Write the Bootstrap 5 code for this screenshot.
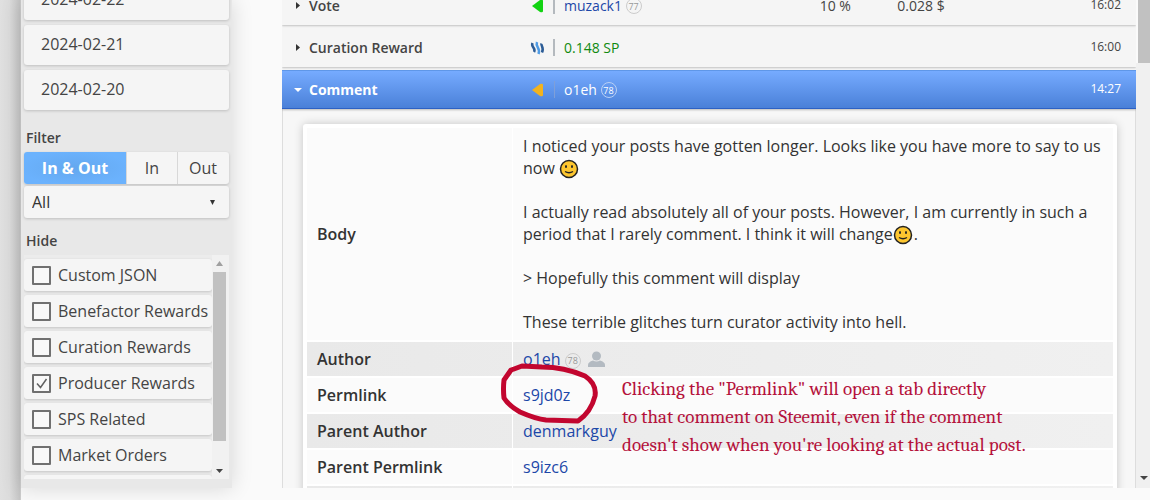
<!DOCTYPE html>
<html lang="en">
<head>
<meta charset="utf-8">
<meta name="viewport" content="width=device-width, initial-scale=1">
<title>Account history</title>
<link href="https://cdn.jsdelivr.net/npm/bootstrap@5.3.0/dist/css/bootstrap.min.css" rel="stylesheet">
<style>
body{font-family:"Open Sans","Noto Sans",sans-serif;font-size:16px;line-height:22px;color:#444;background:#fafafa}
a{color:#1c47a8;text-decoration:none}
.app-shell{height:100vh}
.edge-rail{width:21px;background:linear-gradient(90deg,#e0e0e0,#dcdcdc 45%,#c6c6c6 95%,#d4d4d4)}
.pane{margin-bottom:12px}
.sidebar{width:211px;padding:0 3px 9px;background:#e8e8e8;box-shadow:0 0 20px rgba(0,0,0,.14)}
.tile{background:#f5f5f5;border-radius:3px;box-shadow:0 1px 3px rgba(0,0,0,.18)}
.dates{gap:5px;margin-top:-20px}
.dates .tile{height:40px;padding:8px 17px;color:#444}
.side-title{font-size:14px;line-height:18px;font-weight:600;padding:0 2px;margin:19px 0 5px}
.side-title.low{margin:14px 0 5px}
.seg button{height:32px;border:0;border-left:1px solid #d8d8d8;background:none;color:#444;padding:0}
.seg .seg-all{width:102px}
.seg .seg-part{width:51px}
.seg button.active{border:0;color:#fff;font-weight:700;background:#6bb2fd;border-radius:3px 0 0 3px;background-image:radial-gradient(ellipse at center,#64a8ef,#6bb2fd 75%)}
.type-select{appearance:none;border:0;height:32px;margin-top:2px;padding:0 8px;color:#333;background:#f5f5f5 url("data:image/svg+xml,%3Csvg xmlns='http://www.w3.org/2000/svg' width='6' height='5'%3E%3Cpath d='M0 0h5L2.500 5z' fill='%23333'/%3E%3C/svg%3E") no-repeat right 13px center}
.hide-box{height:224px;background:#ececec}
.hide-list{gap:4px;padding-top:4px}
.hide-list .tile{height:32px;flex:none;gap:7px;padding-left:8px;white-space:nowrap}
.tick{appearance:none;width:19px;height:19px;border:2px solid #707070;border-radius:1px;margin:0;background:#f8f8f8}
.tick:checked{background:#f8f8f8 url("data:image/svg+xml,%3Csvg xmlns='http://www.w3.org/2000/svg' width='15' height='15'%3E%3Cpath d='M3 7.500l3.500 4L12.500 3' fill='none' stroke='%23606060' stroke-width='1.500'/%3E%3C/svg%3E") center no-repeat}
.bar-side{width:17px;background:#f1f1f1;padding:6px 4px 5px 2px}
.bar-side .thumb{flex:0 0 169px;width:13px;margin-top:6px;background:#c1c1c1}
.bar-main{width:14px;background:#f0f0f0}
.bar-main .thumb{height:63px;background:#c1c1c1;border-left:2px solid #fafafa}
.main{margin-left:50px;min-width:0}
.ops{gap:3px;margin-top:-14px}
.op{display:grid;grid-template-columns:234px 27px 266fr 78fr 194fr auto;height:39px;padding:0 15px 0 12px;background:#f5f5f5;font-size:14px;box-shadow:0 1px 2px rgba(0,0,0,.25);align-items:center}
.op .name{font-weight:600;gap:6px}
.op .caret{width:9px}
.op .mark-col{height:17px;border-right:2px solid #b4b9be;display:flex;align-items:center;padding-left:2px}
.op .who{padding-left:9px}
.op .gain{color:#108a10}
.op time{font-size:12px;grid-column:6;padding-bottom:2px}
.op.open{background:linear-gradient(#76abff,#4a80d8);color:#fff;border-top:1px solid #5f97e8;border-bottom:1px solid #2d61c4}
.op.open .name{font-weight:700}
.op.open a{color:#fff}
.op.open .mark-col{border-right:1px solid #7f9fd8}
.rep{display:inline-flex;width:16px;height:16px;border:1px solid #ccc;border-radius:50%;font-size:9px;color:#999;align-items:center;justify-content:center;vertical-align:1px;line-height:9px}
.open .rep{color:#fff;border-color:#b9d0f5}
.details{padding:15px 18px 0 20px;background:#f7f7f7;border:1px solid #ddd;border-width:0 1px}
.sheet{background:#fff;padding:2px 3px;border-radius:3px;box-shadow:0 0 10px rgba(0,0,0,.2)}
.sheet table{border-collapse:separate;border-spacing:1px 2px;width:100%;table-layout:fixed;color:#333}
.sheet th{width:205px;font-weight:600;padding:6px 10px}
.sheet td{padding:6px 10px;height:34px}
.sheet tr{background:#fbfbfb}
.sheet tr:nth-child(even){background:linear-gradient(90deg,#e9e9e9,#f0f0f0)}
.sheet .body-row>*{padding-top:7px;padding-bottom:7px}
.sheet p{margin:0 0 22px}
.face{width:20px;height:20px;vertical-align:-5px;margin-right:1px}
.person{vertical-align:-2px;margin-left:3px}
.note{position:absolute;left:109px;top:-3px;width:440px;font:19px/28px Cambria,"Liberation Serif",serif;color:#b5123c;z-index:2}
.ring{position:absolute;left:-13px;top:-15px;z-index:2;pointer-events:none}
</style>
</head>
<body>
<div class="app-shell d-flex overflow-hidden">
  <div class="edge-rail flex-shrink-0"></div>
  <aside class="sidebar pane flex-shrink-0 d-flex flex-column">
    <nav class="dates d-flex flex-column">
      <a class="tile" href="#">2024-02-22</a>
      <a class="tile" href="#">2024-02-21</a>
      <a class="tile" href="#">2024-02-20</a>
    </nav>
    <h2 class="side-title">Filter</h2>
    <div class="seg tile d-flex flex-shrink-0" role="group" aria-label="Direction">
      <button type="button" class="seg-all active">In &amp; Out</button>
      <button type="button" class="seg-part">In</button>
      <button type="button" class="seg-part">Out</button>
    </div>
    <select class="type-select tile w-100 flex-shrink-0" aria-label="Operation type"><option>All</option></select>
    <h2 class="side-title low">Hide</h2>
    <div class="hide-box d-flex overflow-hidden">
      <div class="hide-list d-flex flex-column flex-grow-1">
        <label class="tile d-flex align-items-center"><input class="tick" type="checkbox">Custom JSON</label>
        <label class="tile d-flex align-items-center"><input class="tick" type="checkbox">Benefactor Rewards</label>
        <label class="tile d-flex align-items-center"><input class="tick" type="checkbox">Curation Rewards</label>
        <label class="tile d-flex align-items-center"><input class="tick" type="checkbox" checked>Producer Rewards</label>
        <label class="tile d-flex align-items-center"><input class="tick" type="checkbox">SPS Related</label>
        <label class="tile d-flex align-items-center"><input class="tick" type="checkbox">Market Orders</label>
        <div class="tile"></div>
      </div>
      <div class="bar-side d-flex flex-column align-items-center flex-shrink-0">
        <svg class="flex-shrink-0" width="7" height="5"><path d="M0 5L3.500 0 7 5z" fill="#a0a0a0"/></svg>
        <div class="thumb"></div>
        <svg class="mt-auto flex-shrink-0" width="7" height="5"><path d="M0 0h7L3.500 4z" fill="#444"/></svg>
      </div>
    </div>
  </aside>

  <main class="main pane flex-grow-1 overflow-hidden">
    <div class="ops d-flex flex-column">
      <div class="op">
        <div class="name d-flex align-items-center"><svg class="caret" height="9"><path d="M2 1l4 3.500L2 8z" fill="#333"/></svg>Vote</div>
        <div class="mark-col"><svg width="14" height="14"><path d="M2 7L10 1q3-1 3 1v10q0 2-3 1z" fill="#12d312"/></svg></div>
        <div class="who"><a href="#">muzack1</a> <span class="rep">77</span></div>
        <div>10 %</div><div>0.028 $</div><time>16:02</time>
      </div>
      <div class="op">
        <div class="name d-flex align-items-center"><svg class="caret" height="9"><path d="M2 1l4 3.500L2 8z" fill="#333"/></svg>Curation Reward</div>
        <div class="mark-col"><svg width="15" height="14" fill="none" stroke-width="2.500"><path d="M2.500 2c-2 4 4 5 1.500 9" stroke="#2c5c96"/><path d="M7 1c-2 5 4 6 1.500 12" stroke="#4f9be4"/><path d="M11.500 2.500c-1 2 3 4 .5 9" stroke="#2c5c96"/></svg></div>
        <div class="who gain">0.148 SP</div>
        <time>16:00</time>
      </div>
      <div class="op open">
        <div class="name d-flex align-items-center"><svg class="caret" height="9"><path d="M0 3h8L4 7z" fill="#fff"/></svg>Comment</div>
        <div class="mark-col"><svg width="14" height="14"><path d="M2 7L10 1q3-1 3 1v10q0 2-3 1z" fill="#f2b31f"/></svg></div>
        <div class="who"><a href="#">o1eh</a> <span class="rep">78</span></div>
        <time>14:27</time>
      </div>
    </div>
    <div class="details">
      <div class="sheet">
        <table>
          <tr class="body-row"><th scope="row">Body</th><td>
            <p>I noticed your posts have gotten longer. Looks like you have more to say to us now <svg class="face" viewBox="0 0 20 20" role="img" aria-label="smile"><circle cx="10" cy="10" r="8.500" fill="#fdc62f" stroke="#222" stroke-width="1.500"/><ellipse cx="7" cy="7.500" rx="1" ry="1.500" fill="#222"/><ellipse cx="13" cy="7.500" rx="1" ry="1.500" fill="#222"/><path d="M6 12.500q4 2.500 8 0" fill="none" stroke="#222" stroke-width="1.300"/></svg></p>
            <p>I actually read absolutely all of your posts. However, I am currently in such a period that I rarely comment. I think it will change<svg class="face" viewBox="0 0 20 20" role="img" aria-label="smile"><circle cx="10" cy="10" r="8.500" fill="#fdc62f" stroke="#222" stroke-width="1.500"/><ellipse cx="7" cy="7.500" rx="1" ry="1.500" fill="#222"/><ellipse cx="13" cy="7.500" rx="1" ry="1.500" fill="#222"/><path d="M6 12.500q4 2.500 8 0" fill="none" stroke="#222" stroke-width="1.300"/></svg>.</p>
            <p>&gt; Hopefully this comment will display</p>
            <p class="mb-0">These terrible glitches turn curator activity into hell.</p>
          </td></tr>
          <tr><th scope="row">Author</th><td><a href="#">o1eh</a> <span class="rep">78</span> <svg class="person" width="17" height="16" fill="#b3bac1"><circle cx="8.500" cy="5" r="4.500"/><path d="M0 16v-2q0-3 5-4.500 3.500 2 7 0 5 1.500 5 4.500v2z"/></svg></td></tr>
          <tr><th scope="row">Permlink</th><td class="position-relative"><a href="#">s9jd0z</a>
            <svg class="ring" width="100" height="64" fill="none" stroke="#c2062f" stroke-width="5" stroke-linejoin="round" stroke-linecap="round"><path d="M14 6L11 7 4 17Q3 26 4 35Q9 43 20 49Q36 56 46 57L78 58Q91 49 95 33Q97 21 85 13Q64 4 42 4L22 3 14 6"/></svg>
            <div class="note">Clicking the "Permlink" will open a tab directly<br>to that comment on Steemit, even if the comment<br>doesn't show when you're looking at the actual post.</div></td></tr>
          <tr><th scope="row">Parent Author</th><td><a href="#">denmarkguy</a></td></tr>
          <tr><th scope="row">Parent Permlink</th><td><a href="#">s9izc6</a></td></tr>
          <tr><th></th><td></td></tr>
        </table>
      </div>
    </div>
  </main>
  <div class="bar-main pane flex-shrink-0 d-flex flex-column">
    <div class="thumb"></div>
    <svg class="mt-auto ms-1 mb-2" width="8" height="4"><path d="M0 0h8L4 4z" fill="#444"/></svg>
  </div>
</div>
<script src="https://cdn.jsdelivr.net/npm/bootstrap@5.3.0/dist/js/bootstrap.bundle.min.js"></script>
</body>
</html>
